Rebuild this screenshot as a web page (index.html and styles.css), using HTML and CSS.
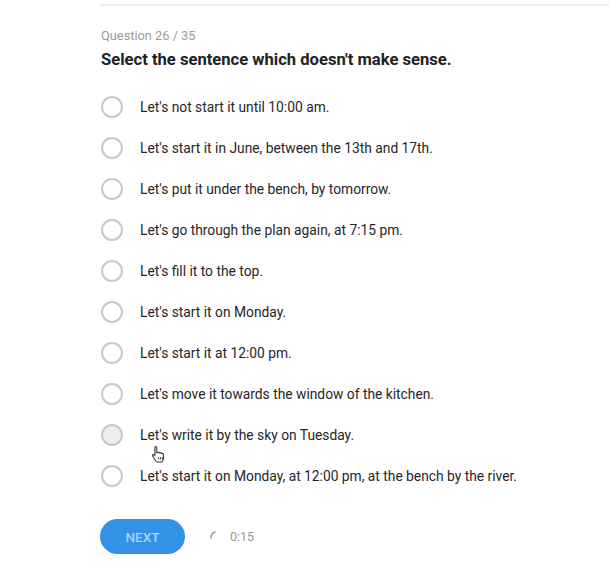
FILE: index.html
```html
<!DOCTYPE html>
<html>
<head>
<meta charset="utf-8">
<link rel="stylesheet" href="styles.css">
</head>
<body>
<div class="page">
  <div class="rule"></div>
  <div class="counter">Question 26 / 35</div>
  <h1 class="title">Select the sentence which doesn't make sense.</h1>
  <ul class="options">
    <li class="option"><span class="radio"></span><span class="label">Let's not start it until 10:00 am.</span></li>
    <li class="option"><span class="radio"></span><span class="label">Let's start it in June, between the 13th and 17th.</span></li>
    <li class="option"><span class="radio"></span><span class="label">Let's put it under the bench, by tomorrow.</span></li>
    <li class="option"><span class="radio"></span><span class="label">Let's go through the plan again, at 7:15 pm.</span></li>
    <li class="option"><span class="radio"></span><span class="label">Let's fill it to the top.</span></li>
    <li class="option"><span class="radio"></span><span class="label">Let's start it on Monday.</span></li>
    <li class="option"><span class="radio"></span><span class="label">Let's start it at 12:00 pm.</span></li>
    <li class="option"><span class="radio"></span><span class="label">Let's move it towards the window of the kitchen.</span></li>
    <li class="option hover"><span class="radio"></span><span class="label">Let's write it by the sky on Tuesday.</span>
      <svg class="cursor" width="16" height="18" viewBox="0 0 16 18">
        <path d="M4.5 1.5c.8 0 1.3.6 1.3 1.3v5.2l.6-.2c.4-.9 1.9-.8 2.2.2.6-.6 1.8-.3 2 .5.7-.4 1.8 0 1.8.9v4.2c0 1.6-1.1 3.4-2.6 3.4H6.6c-.9 0-1.5-.5-2-1.200L1.6 11c-.6-.9.5-2 1.4-1.3l.9.9V2.8c0-.7.2-1.3.6-1.3z" fill="#fff" stroke="#333" stroke-width="1.1" stroke-linejoin="round"/>
        <path d="M7.6 12v2.6M9.6 12v2.6M11.6 12v2.6" stroke="#333" stroke-width="0.9"/>
      </svg>
    </li>
    <li class="option"><span class="radio"></span><span class="label">Let's start it on Monday, at 12:00 pm, at the bench by the river.</span></li>
  </ul>
  <div class="footer">
    <button class="next">NEXT</button>
    <div class="timer">
      <svg class="spin" width="10" height="10" viewBox="0 0 10 10"><path d="M2 8 A6 6 0 0 1 6 2" fill="none" stroke="#999" stroke-width="1.4" stroke-linecap="round"/></svg>
      <span class="time">0:15</span>
    </div>
  </div>
</div>
</body>
</html>
```
FILE: styles.css
```css
html, body {
  margin: 0;
  padding: 0;
  background: #fff;
}
body {
  font-family: Roboto, "Liberation Sans", Arial, sans-serif;
  color: #333;
}
.page {
  padding-left: 100px;
  padding-top: 4px;
}
.rule {
  height: 2px;
  background: #ececec;
}
.counter {
  margin-top: 22px;
  padding-left: 1px;
  font-size: 12.8px;
  line-height: 16px;
  color: #9a9a9a;
}
.title {
  margin: 5px 0 0 0;
  padding-left: 1px;
  font-size: 16.6px;
  line-height: 22px;
  font-weight: 700;
  color: #222;
}
.options {
  list-style: none;
  margin: 15px 0 0 0;
  padding: 0;
}
.option {
  position: relative;
  display: flex;
  align-items: center;
  height: 41px;
}
.radio {
  box-sizing: border-box;
  width: 22px;
  height: 22px;
  border-radius: 50%;
  border: 2px solid #c9c9c9;
  background: #fff;
  margin-left: 1px;
  flex: none;
}
.hover .radio {
  background: #ededed;
}
.label {
  margin-left: 17px;
  font-size: 13.8px;
  font-weight: 400;
  color: #262626;
}
.cursor {
  position: absolute;
  left: 51px;
  top: 31px;
}
.footer {
  display: flex;
  align-items: center;
  margin-top: 23px;
}
.next {
  width: 85px;
  height: 35px;
  border: none;
  border-radius: 18px;
  background: #3192e6;
  color: #a9d3f6;
  font-family: Roboto, "Liberation Sans", Arial, sans-serif;
  font-size: 13.5px;
  font-weight: 500;
  padding: 0;
}
.timer {
  display: flex;
  align-items: center;
  margin-left: 24px;
  color: #999;
  font-size: 12.5px;
}
.spin {
  margin-right: 11px;
  margin-top: -4px;
}
```
